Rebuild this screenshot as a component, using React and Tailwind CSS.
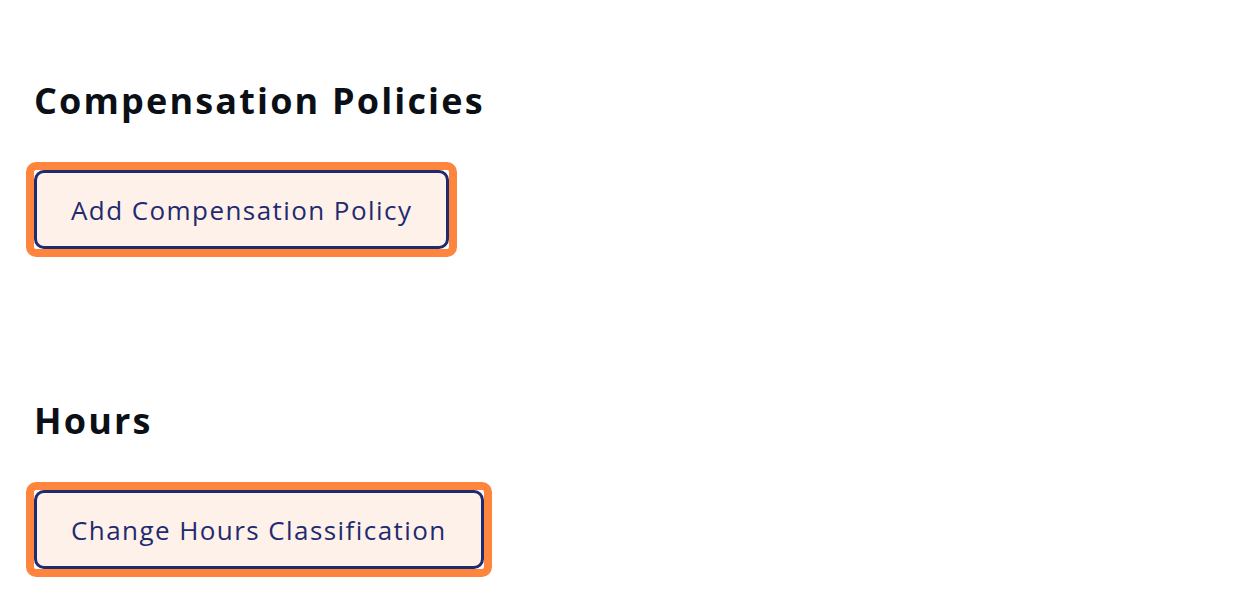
import React from 'react';

const ActionButton = ({ label }) => (
  <div className="inline-flex rounded-[10px] border-8 border-[#fd853e] bg-white">
    <button
      type="button"
      className="flex h-[79px] items-center rounded-[10px] border-[3px] border-[#1e2b6f] bg-[#fef1ea] px-[34px] text-[26px] leading-[36px] tracking-[0.055em] text-[#1e2b6f]"
    >
      {label}
    </button>
  </div>
);

const Section = ({ title, action }) => (
  <section className="flex flex-col items-start">
    <h2 className="mb-[37px] px-2 text-[36px] leading-[48px] font-bold tracking-[0.06em] text-[#0b1016]">{title}</h2>
    <ActionButton label={action} />
  </section>
);

export default function App() {
  return (
    <div
      className="min-h-[612px] w-full bg-white pl-[26px] pt-[77px]"
      style={{ fontFamily: '"Open Sans", "Noto Sans", sans-serif' }}
    >
      <div className="flex flex-col gap-[140px]">
        <Section title="Compensation Policies" action="Add Compensation Policy" />
        <Section title="Hours" action="Change Hours Classification" />
      </div>
    </div>
  );
}
